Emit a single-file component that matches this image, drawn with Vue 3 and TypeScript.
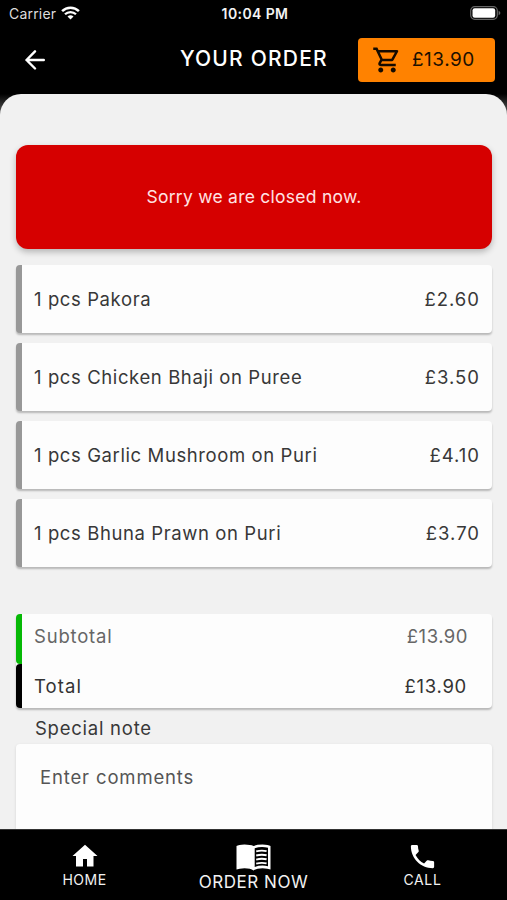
<script setup lang="ts">
interface OrderItem {
  id: string
  name: string
  price: string
}

const items: OrderItem[] = [
  { id: 'pakora', name: '1 pcs Pakora', price: '£2.60' },
  { id: 'bhaji', name: '1 pcs Chicken Bhaji on Puree', price: '£3.50' },
  { id: 'mushroom', name: '1 pcs Garlic Mushroom on Puri', price: '£4.10' },
  { id: 'prawn', name: '1 pcs Bhuna Prawn on Puri', price: '£3.70' },
]
const total = '£13.90'
</script>

<template>
  <div class="screen">
    <div class="status">
      <div class="carrier">
        <span>Carrier</span>
        <svg width="19" height="14" viewBox="0 0 19 14" fill="none" stroke="#fff">
          <path d="M1.1 5.1a12 12 0 0 1 16.8 0" stroke-width="2.5" />
          <path d="M4 8.3a7.8 7.8 0 0 1 11 0" stroke-width="2.3" />
          <path d="M9.5 13.6 6.5 10.6a4.3 4.3 0 0 1 6 0Z" fill="#fff" stroke="none" />
        </svg>
      </div>
      <span class="clock">10:04 PM</span>
      <svg class="battery" width="31" height="14" viewBox="0 0 31 14">
        <rect x=".7" y=".7" width="26.6" height="12.6" rx="4" fill="none" stroke="#666" stroke-width="1.2" />
        <rect x="2.5" y="2.3" width="22.7" height="9.4" rx="2.2" fill="#fff" />
        <path d="M28.6 4.7q1.8.8 1.8 2.3t-1.8 2.3Z" fill="#666" />
      </svg>
    </div>

    <header class="header">
      <button class="back" aria-label="Back">
        <svg width="20" height="20" viewBox="0 0 20 20" fill="none" stroke="#fff" stroke-width="2.4" stroke-linecap="round" stroke-linejoin="round">
          <path d="M10 1.3 1.5 10 10 18.5M1.5 10H18.8" />
        </svg>
      </button>
      <h1 class="title">YOUR ORDER</h1>
      <button class="cart">
        <svg width="30" height="30" viewBox="0 0 24 24" fill="#140b00">
          <path d="M15.55 13c.75 0 1.41-.41 1.75-1.03l3.58-6.49A.996.996 0 0 0 20.01 4H5.21l-.94-2H1v2h2l3.6 7.59-1.35 2.44C4.52 15.37 5.48 17 7 17h12v-2H7l1.1-2h7.45zM6.16 6h12.15l-2.76 5H8.53L6.16 6zM7 18c-1.1 0-1.99.9-1.99 2S5.9 22 7 22s2-.9 2-2-.9-2-2-2zm10 0c-1.1 0-1.99.9-1.99 2s.89 2 1.99 2 2-.9 2-2-.9-2-2-2z" />
        </svg>
        <span>{{ total }}</span>
      </button>
    </header>

    <div class="sheet-wrap">
      <main class="sheet">
        <div class="alert">Sorry we are closed now.</div>
        <ul class="items">
          <li v-for="item in items" :key="item.id" class="item">
            <span class="name">{{ item.name }}</span>
            <span class="price">{{ item.price }}</span>
          </li>
        </ul>
        <section class="summary">
          <div class="row subtotal"><span>Subtotal</span><span class="amount">{{ total }}</span></div>
          <div class="row total"><span>Total</span><span class="amount">{{ total }}</span></div>
        </section>
        <h2 class="note-title">Special note</h2>
        <div class="note">Enter comments</div>
      </main>
    </div>

    <nav class="nav">
      <a class="tab home">
        <svg width="30" height="30" viewBox="0 0 24 24" fill="#fff"><path d="M10.4 20.4v-6h3.2v6h5.2V12H22L12 3 2 12h2.8v8.4z" /></svg>
        <span>HOME</span>
      </a>
      <a class="tab order">
        <svg width="35" height="27" viewBox="0 0 35 27">
          <path d="M.5 2Q2.5.7 8.5.5 14.5.5 17.5 2 20.5.5 26.5.5 32.5.7 34.5 2V25.6Q32 24.3 26.5 24.2 20.5 24.3 17.5 26.4 14.5 24.3 8.5 24.2 3 24.3.5 25.6Z" fill="#fff" />
          <path d="M18.7 4.3Q25 2.2 32 3.8V22.2Q25 20.6 18.7 23Z" fill="#000" />
          <path d="M20.2 7.4q5-1.4 10.4-.3M20.2 11.5q5-1.4 10.4-.3M20.2 15.6q5-1.4 10.4-.3M20.2 19.7q5-1.4 10.4-.3" fill="none" stroke="#fff" stroke-width="1.9" />
        </svg>
        <span>ORDER NOW</span>
      </a>
      <a class="tab call">
        <svg width="31" height="31" viewBox="0 0 24 24" fill="#fff"><path d="M6.62 10.79c1.44 2.83 3.76 5.14 6.59 6.59l2.2-2.2c.27-.27.67-.36 1.02-.24 1.12.37 2.33.57 3.57.57.55 0 1 .45 1 1V20c0 .55-.45 1-1 1-9.39 0-17-7.61-17-17 0-.55.45-1 1-1h3.5c.55 0 1 .45 1 1 0 1.25.2 2.45.57 3.57.11.35.03.74-.25 1.02l-2.2 2.2z" /></svg>
        <span>CALL</span>
      </a>
    </nav>
  </div>
</template>

<style>
body { margin: 0; background: #000; }
</style>

<style scoped>
* { box-sizing: border-box; }
.screen {
  width: 507px;
  height: 900px;
  display: flex;
  flex-direction: column;
  overflow: hidden;
  background: #000;
  color: #383838;
  font-family: Inter, Roboto, sans-serif;
}
button { border: 0; padding: 0; background: none; font: inherit; }
.status {
  height: 28px;
  flex: none;
  display: grid;
  grid-template-columns: 1fr auto 1fr;
  align-items: center;
  padding: 0 6px 2px 9px;
  color: #fff;
}
.carrier { display: flex; align-items: center; gap: 5px; font-size: 14px; letter-spacing: 0.2px; color: #ddd; }
.clock { font-size: 14px; font-weight: 600; letter-spacing: 0.4px; color: #f4f4f4; }
.battery { justify-self: end; }
.header {
  height: 66px;
  flex: none;
  display: grid;
  grid-template-columns: 155px 197px 137px;
  align-items: center;
  padding: 0 0 3px 6px;
}
.back { justify-self: start; height: 20px; margin-left: 19px; }
.title {
  margin: 0;
  padding: 0 0 2px 19px;
  color: #fff;
  font-size: 21px;
  font-weight: 500;
  letter-spacing: 1.2px;
  white-space: nowrap;
}
.cart {
  height: 44px;
  display: flex;
  align-items: center;
  gap: 10px;
  padding-left: 14px;
  border-radius: 4px;
  background: #ff8200;
  color: #1c1000;
  font-size: 19px;
  letter-spacing: 0.5px;
}
.sheet-wrap { flex: 1; min-height: 0; background: linear-gradient(#000, #666 22px); }
.sheet {
  height: 100%;
  overflow: hidden;
  padding: 51px 15px 0 16px;
  border-radius: 21px 21px 0 0;
  background: #f1f1f1;
}
.alert {
  height: 104px;
  display: flex;
  align-items: center;
  justify-content: center;
  padding-bottom: 2px;
  border-radius: 12px;
  background: #d60000;
  color: #ffe3e3;
  font-size: 17.5px;
  letter-spacing: 0.25px;
  box-shadow: 0 3px 6px rgba(0, 0, 0, 0.25);
}
.items { display: grid; gap: 10px; margin: 16px 0 0; padding: 0; list-style: none; }
.item {
  height: 68px;
  display: flex;
  align-items: center;
  justify-content: space-between;
  padding: 0 12px 1px;
  border-left: 6px solid #989898;
  border-radius: 4px;
  background: #fdfdfd;
  font-size: 18.5px;
  box-shadow: 0 2px 2px rgba(0, 0, 0, 0.24);
}
.name { letter-spacing: 0.6px; }
.price { letter-spacing: 1px; }
.summary {
  margin-top: 47px;
  border-radius: 4px;
  background: #fdfdfd;
  box-shadow: 0 2px 2px rgba(0, 0, 0, 0.24);
}
.row {
  display: flex;
  justify-content: space-between;
  align-items: center;
  padding: 0 24px 0 12px;
  border-left: 6px solid #000;
  border-radius: 4px;
  font-size: 18.5px;
  letter-spacing: 0.8px;
}
.row .amount { letter-spacing: 0.5px; }
.subtotal { height: 50px; padding-bottom: 6px; border-left-color: #06b906; color: #666; }
.total { height: 44px; padding-right: 25px; color: #333; letter-spacing: 1.1px; }
.total .amount { letter-spacing: 0.7px; }
.note-title { margin: 9px 0 0 19px; font-size: 18.5px; font-weight: 400; line-height: 22px; letter-spacing: 0.75px; }
.note {
  height: 100px;
  margin-top: 5px;
  padding: 22px 24px;
  border-radius: 4px;
  background: #fdfdfd;
  color: #555;
  font-size: 18.5px;
  line-height: 22px;
  letter-spacing: 0.85px;
  box-shadow: 0 1px 3px rgba(0, 0, 0, 0.12);
}
.nav {
  height: 71px;
  flex: none;
  display: grid;
  grid-template-columns: repeat(3, 1fr);
  border-top: 1px solid #333;
  color: #f2f2f2;
}
.tab { display: flex; flex-direction: column; align-items: center; }
.home { padding-top: 11px; font-size: 14px; letter-spacing: 0.5px; }
.order { padding-top: 14px; font-size: 17px; letter-spacing: 0.55px; }
.order span { padding-top: 1px; }
.call { padding-top: 11px; font-size: 14px; letter-spacing: 0.6px; }
.call span { margin-top: -1px; }
</style>
